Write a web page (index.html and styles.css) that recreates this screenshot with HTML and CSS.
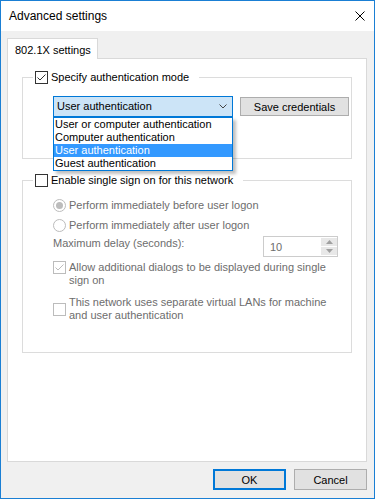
FILE: index.html
```html
<!DOCTYPE html>
<html lang="en">
<head>
    <meta charset="UTF-8"/>
    <title>Advanced settings</title>
    <link rel="stylesheet" href="styles.css">
</head>
<body>

<div class="window">
    <div class="titlebar">
        <span class="title">Advanced settings</span>
        <svg class="close" width="10" height="10" viewBox="0 0 10 10">
            <path d="M0.5 0.5L9.5 9.5M9.5 0.5L0.5 9.5" stroke="#000" stroke-width="1" fill="none"/>
        </svg>
    </div>

    <div class="client">
        <div class="tabs">
            <div class="tab">802.1X settings</div>
        </div>

        <div class="panel">
            <div class="group group-auth">
                <label class="group-title">
                    <span class="check">
                        <svg width="11" height="11" viewBox="0 0 11 11"><path d="M1.5 5.5L4 8L9.5 2.5" stroke="#333" stroke-width="1" fill="none"/></svg>
                    </span>
                    Specify authentication mode
                </label>
                <div class="group-body auth-row">
                    <div class="combo">
                        <span>User authentication</span>
                        <svg width="8" height="5" viewBox="0 0 8 5"><path d="M0.5 0.5L4 4L7.5 0.5" stroke="#444" stroke-width="1" fill="none"/></svg>
                        <ul class="combo-list">
                            <li>User or computer authentication</li>
                            <li>Computer authentication</li>
                            <li class="selected">User authentication</li>
                            <li>Guest authentication</li>
                        </ul>
                    </div>
                    <button class="btn save-btn">Save credentials</button>
                </div>
            </div>

            <div class="group group-sso">
                <label class="group-title">
                    <span class="check"></span>
                    Enable single sign on for this network
                </label>
                <div class="group-body sso-body">
                    <div class="option radio-first">
                        <span class="radio checked"></span>
                        <span>Perform immediately before user logon</span>
                    </div>
                    <div class="option radio-second">
                        <span class="radio"></span>
                        <span>Perform immediately after user logon</span>
                    </div>
                    <div class="delay-row">
                        <span class="delay-label">Maximum delay (seconds):</span>
                        <div class="spin">
                            <span class="spin-value">10</span>
                            <div class="spin-buttons">
                                <span class="spin-btn"><svg width="7" height="4" viewBox="0 0 7 4"><path d="M0 4L3.5 0L7 4Z" fill="#a0a0a0"/></svg></span>
                                <span class="spin-btn"><svg width="7" height="4" viewBox="0 0 7 4"><path d="M0 0L3.5 4L7 0Z" fill="#a0a0a0"/></svg></span>
                            </div>
                        </div>
                    </div>
                    <div class="option option-allow">
                        <span class="check disabled">
                            <svg width="11" height="11" viewBox="0 0 11 11"><path d="M1.5 5.5L4 8L9.5 2.5" stroke="#bcbcbc" stroke-width="1" fill="none"/></svg>
                        </span>
                        <span>Allow additional dialogs to be displayed during single<br>sign on</span>
                    </div>
                    <div class="option option-vlan">
                        <span class="check disabled"></span>
                        <span>This network uses separate virtual LANs for machine<br>and user authentication</span>
                    </div>
                </div>
            </div>
        </div>

        <div class="footer">
            <button class="btn ok-btn">OK</button>
            <button class="btn">Cancel</button>
        </div>
    </div>
</div>

</body>
</html>
```

FILE: styles.css
```css
html,
body {
  margin: 0;
  width: 375px;
  height: 499px;
  overflow: hidden;
}

body {
  font-family: 'Liberation Sans', Arial, sans-serif;
  font-size: 11px;
  line-height: 13px;
  color: #000;
}

.window {
  box-sizing: border-box;
  width: 375px;
  height: 499px;
  border: 1px solid #1a7fd4;
  background: #ffffff;
  display: flex;
  flex-direction: column;
}

.titlebar {
  height: 30px;
  display: flex;
  align-items: center;
  justify-content: space-between;
  padding: 0 9px 0 8px;
  flex-shrink: 0;
}

.title {
  font-size: 12px;
  line-height: 15px;
  padding-top: 1px;
}

.client {
  flex: 1;
  background: #f0f0f0;
  padding: 7px 6px 0 6px;
}

.tabs {
  display: flex;
}

.tab {
  position: relative;
  z-index: 1;
  box-sizing: border-box;
  width: 91px;
  height: 21px;
  margin-bottom: -1px;
  padding: 5px 0 0 7px;
  background: #ffffff;
  border: 1px solid #d9d9d9;
  border-bottom: none;
}

.panel {
  box-sizing: border-box;
  width: 360px;
  height: 404px;
  padding: 0 14px;
  background: #ffffff;
  border: 1px solid #d9d9d9;
}

.group {
  border: 1px solid #dcdcdc;
}

.group-auth {
  margin-top: 18px;
}

.group-sso {
  margin-top: 21px;
}

.group-title {
  display: flex;
  align-items: center;
  gap: 3px;
  width: fit-content;
  height: 15px;
  margin: -8px 0 0 10px;
  padding: 0 10px 0 2px;
  background: #ffffff;
}

.group-body {
  padding-left: 30px;
}

.check {
  box-sizing: border-box;
  width: 13px;
  height: 13px;
  flex-shrink: 0;
  border: 1px solid #333333;
  background: #ffffff;
  display: flex;
}

.check.disabled {
  border-color: #bcbcbc;
}

.radio {
  box-sizing: border-box;
  width: 13px;
  height: 13px;
  flex-shrink: 0;
  border: 1px solid #bcbcbc;
  border-radius: 50%;
  display: flex;
  align-items: center;
  justify-content: center;
}

.radio.checked::after {
  content: "";
  width: 7px;
  height: 7px;
  border-radius: 50%;
  background: #bcbcbc;
}

/* authentication mode */

.auth-row {
  display: flex;
  align-items: center;
  padding-top: 11px;
  padding-bottom: 41px;
}

.combo {
  position: relative;
  box-sizing: border-box;
  width: 180px;
  height: 21px;
  display: flex;
  align-items: center;
  justify-content: space-between;
  padding: 0 5px 0 3px;
  background: #cce4f7;
  border: 1px solid #0078d7;
}

.combo-list {
  position: absolute;
  z-index: 2;
  top: 20px;
  left: -1px;
  box-sizing: border-box;
  width: 180px;
  margin: 0;
  padding: 0;
  list-style: none;
  background: #ffffff;
  border: 1px solid #0078d7;
  box-shadow: 3px 3px 3px rgba(0, 0, 0, 0.25);
}

.combo-list li {
  height: 13px;
  padding-left: 1px;
  white-space: nowrap;
}

.combo-list li.selected {
  background: #3399ff;
  color: #ffffff;
}

.btn {
  box-sizing: border-box;
  height: 21px;
  padding: 0;
  font-family: inherit;
  font-size: 11px;
  color: #000;
  background: #e1e1e1;
  border: 1px solid #adadad;
}

.save-btn {
  width: 109px;
  height: 19px;
  margin-left: 7px;
}

/* single sign on */

.sso-body {
  padding-right: 13px;
  padding-bottom: 30px;
  color: #6d6d6d;
}

.option {
  display: flex;
  align-items: center;
  gap: 3px;
}

.radio-first {
  margin-top: 11px;
}

.radio-second {
  margin-top: 7px;
}

.delay-row {
  display: flex;
  justify-content: space-between;
  align-items: flex-start;
  margin-top: 4px;
}

.delay-label {
  padding-top: 1px;
}

.spin {
  box-sizing: border-box;
  width: 75px;
  height: 21px;
  display: flex;
  border: 1px solid #cccccc;
  background: #ffffff;
}

.spin-value {
  flex: 1;
  padding: 4px 0 0 6px;
}

.spin-buttons {
  width: 16px;
  display: flex;
  flex-direction: column;
  gap: 1px;
  padding: 1px 0;
}

.spin-btn {
  flex: 1;
  display: flex;
  align-items: center;
  justify-content: center;
  background: #e8e8e8;
}

.option-allow {
  align-items: flex-start;
  margin-top: 4px;
}

.option-vlan {
  margin-top: 9px;
}

.footer {
  width: 360px;
  display: flex;
  justify-content: flex-end;
  gap: 8px;
  margin-top: 7px;
}

.footer .btn {
  width: 73px;
}

.ok-btn {
  border: 2px solid #0078d7;
}
```
